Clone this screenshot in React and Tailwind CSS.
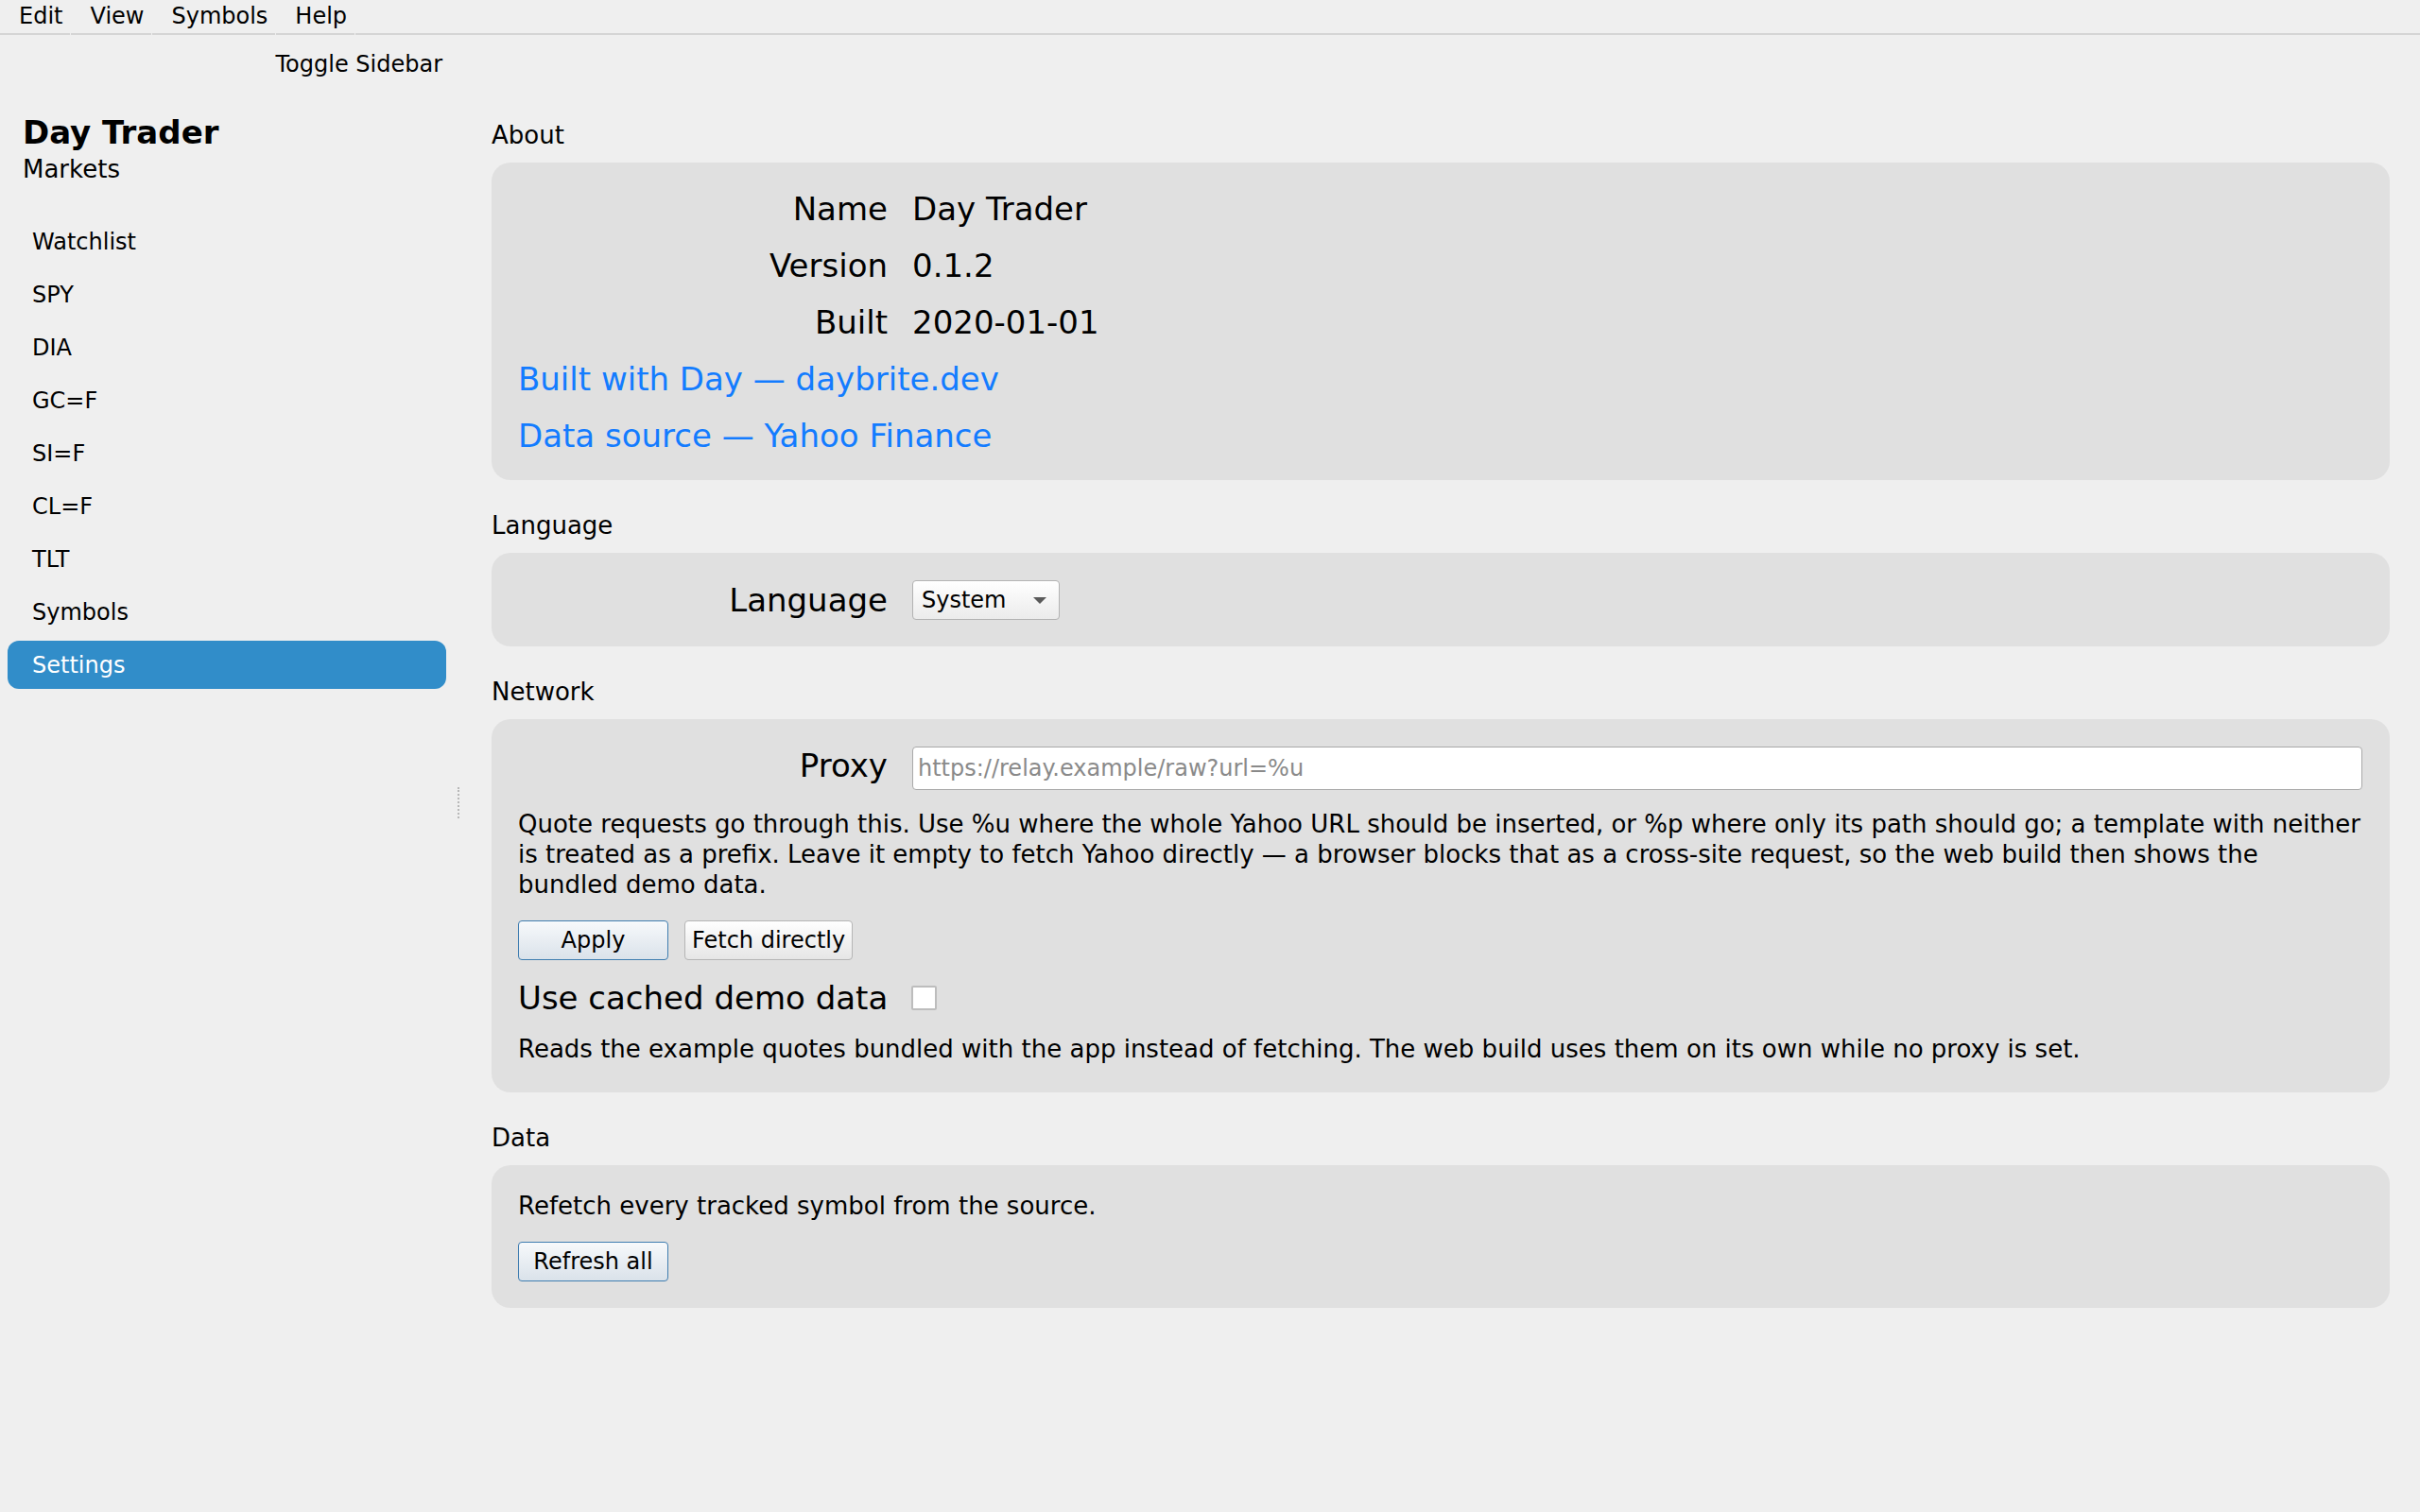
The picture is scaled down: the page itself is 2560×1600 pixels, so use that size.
import React from "react";

const menus = ["Edit", "View", "Symbols", "Help"];
const navItems = ["Watchlist", "SPY", "DIA", "GC=F", "SI=F", "CL=F", "TLT", "Symbols", "Settings"];

function SectionTitle({ children, first }) {
  return (
    <div className={`${first ? "" : "mt-[32px]"} mb-[13px] text-[26px] leading-[32px]`}>
      {children}
    </div>
  );
}

function Panel({ children, className = "" }) {
  return (
    <div className={`rounded-[20px] bg-[#e0e0e0] pl-[28px] pr-[29px] ${className}`}>
      {children}
    </div>
  );
}

function Label({ children }) {
  return (
    <div className="w-[391px] shrink-0 whitespace-nowrap text-right text-[34px] leading-[40px]">{children}</div>
  );
}

function Button({ children, primary }) {
  return (
    <button
      className={
        primary
          ? "h-[42px] min-w-[159px] rounded-[4px] border border-[#3f7db0] bg-linear-to-b from-[#f7f9fb] to-[#dae2ea] px-[7px] text-[24px] leading-none"
          : "h-[42px] min-w-[159px] rounded-[4px] border border-[#b5b5b5] bg-linear-to-b from-white to-[#e6e6e6] px-[7px] text-[24px] leading-none"
      }
    >
      {children}
    </button>
  );
}

export default function App() {
  return (
    <div className="flex h-screen w-full flex-col bg-[#efefef] font-['DejaVu_Sans','Liberation_Sans',sans-serif] text-black">
      {/* Menu bar */}
      <div className="flex h-[37px] shrink-0">
        {menus.map((m) => (
          <div
            key={m}
            className="mr-px h-full border-b-2 border-[#d5d5d5] pl-[20px] pr-[8px] text-[24px] leading-[35px]"
          >
            {m}
          </div>
        ))}
        <div className="flex-1 border-b-2 border-[#d5d5d5]" />
      </div>

      <div className="flex min-h-0 flex-1">
        {/* Sidebar */}
        <div className="w-[480px] shrink-0 px-[8px]">
          <div className="mt-[16px] flex justify-end pr-[4px] text-[24px] leading-[30px]">
            Toggle Sidebar
          </div>
          <div className="mt-[37px] pl-[16px]">
            <div className="text-[34px] font-bold leading-[40px]">Day Trader</div>
            <div className="mt-[3px] text-[26px] leading-[32px]">Markets</div>
          </div>
          <div className="mt-[35px] flex flex-col gap-[5px]">
            {navItems.map((item) => (
              <div
                key={item}
                className={
                  item === "Settings"
                    ? "flex h-[51px] items-center rounded-[12px] bg-[#318dc9] pl-[26px] text-[24px] text-white"
                    : "flex h-[51px] items-center rounded-[12px] pl-[26px] text-[24px]"
                }
              >
                {item}
              </div>
            ))}
          </div>
        </div>

        {/* Splitter */}
        <div className="flex w-[10px] shrink-0 items-center justify-center">
          <div className="mt-[62px] h-[33px] border-l-2 border-dotted border-[#b8b8b8]" />
        </div>

        {/* Settings page */}
        <div className="flex-1 pl-[30px] pr-[32px] pt-[90px]">
          <SectionTitle first>About</SectionTitle>
          <Panel className="flex flex-col gap-[20px] pt-[29px] pb-[27px]">
            <div className="flex">
              <Label>Name</Label>
              <div className="ml-[26px] text-[34px] leading-[40px]">Day Trader</div>
            </div>
            <div className="flex">
              <Label>Version</Label>
              <div className="ml-[26px] text-[34px] leading-[40px]">0.1.2</div>
            </div>
            <div className="flex">
              <Label>Built</Label>
              <div className="ml-[26px] text-[34px] leading-[40px]">2020-01-01</div>
            </div>
            <div className="text-[34px] leading-[40px] text-[#137cff]">Built with Day — daybrite.dev</div>
            <div className="text-[34px] leading-[40px] text-[#137cff]">Data source — Yahoo Finance</div>
          </Panel>

          <SectionTitle>Language</SectionTitle>
          <Panel className="pt-[29px] pb-[28px]">
            <div className="flex items-center">
              <Label>Language</Label>
              <div className="ml-[26px] flex h-[42px] w-[156px] items-center justify-between rounded-[4px] border border-[#b3b3b3] bg-linear-to-b from-white to-[#ebebeb] pl-[9px] pr-[13px] text-[24px]">
                <span>System</span>
                <span className="h-0 w-0 border-l-[7px] border-r-[7px] border-t-[7px] border-l-transparent border-r-transparent border-t-[#5a5a5a]" />
              </div>
            </div>
          </Panel>

          <SectionTitle>Network</SectionTitle>
          <Panel className="pt-[29px] pb-[30px]">
            <div className="flex items-start">
              <Label>Proxy</Label>
              <input
                className="ml-[26px] h-[46px] min-w-0 flex-1 rounded-[4px] border border-[#a9a9a9] bg-white px-[5px] text-[24px] outline-none placeholder:text-[#8a8a8a]"
                placeholder="https://relay.example/raw?url=%u"
              />
            </div>
            <p className="mt-[20px] text-[26px] leading-[32px]">
              Quote requests go through this. Use %u where the whole Yahoo URL should be inserted, or %p where only its
              path should go; a template with neither is treated as a prefix. Leave it empty to fetch Yahoo directly — a
              browser blocks that as a cross-site request, so the web build then shows the bundled demo data.
            </p>
            <div className="mt-[22px] flex gap-[17px]">
              <Button primary>Apply</Button>
              <Button>Fetch directly</Button>
            </div>
            <div className="mt-[20px] flex h-[40px] items-center">
              <Label>Use cached demo data</Label>
              <div className="ml-[25px] h-[26px] w-[27px] rounded-[2px] border-2 border-[#bdbdbd] bg-white" />
            </div>
            <p className="mt-[18px] text-[26px] leading-[32px]">
              Reads the example quotes bundled with the app instead of fetching. The web build uses them on its own while
              no proxy is set.
            </p>
          </Panel>

          <SectionTitle>Data</SectionTitle>
          <Panel className="pt-[27px] pb-[28px]">
            <p className="text-[26px] leading-[32px]">Refetch every tracked symbol from the source.</p>
            <div className="mt-[22px] flex">
              <Button primary>Refresh all</Button>
            </div>
          </Panel>
        </div>
      </div>
    </div>
  );
}
